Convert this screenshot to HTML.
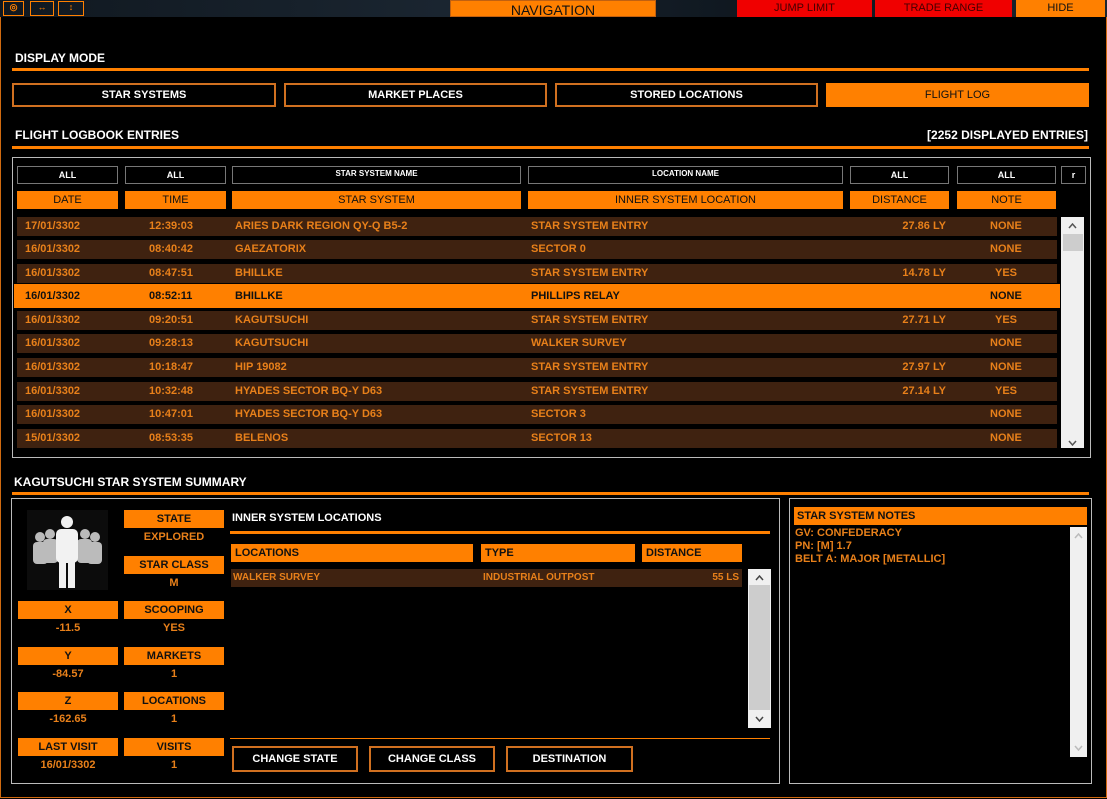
<!DOCTYPE html>
<html><head><meta charset="utf-8">
<style>
*{margin:0;padding:0;box-sizing:border-box}
body{width:1107px;height:799px;background:#000;position:relative;overflow:hidden;font-family:"Liberation Sans",sans-serif;font-weight:bold;font-size:11px;color:#fff}
div{position:absolute}
.o{background:#ff8000;color:#111;text-align:center}
.b{border:2px solid #d07020;color:#fff;text-align:center;background:#000}
.f{border:1px solid #777;color:#fff;text-align:center;font-size:9px}
.r{left:17px;width:1040px;height:19px;background:#3f2210;color:#e8801a;line-height:19px}
.r.s{left:14px;width:1046px;background:#ff8000;color:#111}
.r span{position:absolute}
.t{color:#fff;font-size:12px}
.v{color:#e8801a;text-align:center;width:100px}
.line{background:#ff8000;height:3px}
svg{position:absolute}
</style></head><body>
<div style="left:0;top:0;width:1107px;height:17px;background:linear-gradient(90deg,#101820,#1a2530 40%,#0e161e 70%,#1b2630)"></div>
<div style="left:3px;top:1px;width:21px;height:15px;border:1px solid #ff8000;color:#ff8000;font-size:9px;text-align:center">◎</div>
<div style="left:30px;top:1px;width:24px;height:15px;border:1px solid #ff8000;color:#ff8000;font-size:9px;text-align:center">↔</div>
<div style="left:58px;top:1px;width:26px;height:15px;border:1px solid #ff8000;color:#ff8000;font-size:9px;text-align:center">↕</div>
<div class="o" style="left:450px;top:0;width:206px;height:17px;font-size:14px;font-weight:normal;line-height:18px;border:1px solid #c06010">NAVIGATION</div>
<div style="left:737px;top:0;width:135px;height:17px;background:#f00000;color:#400;text-align:center;line-height:16px;font-weight:normal;font-size:11px">JUMP LIMIT</div>
<div style="left:875px;top:0;width:137px;height:17px;background:#f00000;color:#400;text-align:center;line-height:16px;font-weight:normal;font-size:11px">TRADE RANGE</div>
<div class="o" style="left:1016px;top:0;width:89px;height:17px;line-height:16px;font-weight:normal">HIDE</div>
<div style="left:0;top:17px;width:1107px;height:781px;border:1px solid #d06a10;border-top:none"></div>

<div class="t" style="left:15px;top:51px">DISPLAY MODE</div>
<div class="line" style="left:12px;top:68px;width:1077px"></div>
<div class="b" style="left:12px;top:83px;width:264px;height:24px;line-height:20px">STAR SYSTEMS</div>
<div class="b" style="left:284px;top:83px;width:263px;height:24px;line-height:20px">MARKET PLACES</div>
<div class="b" style="left:555px;top:83px;width:263px;height:24px;line-height:20px">STORED LOCATIONS</div>
<div class="o" style="left:826px;top:83px;width:263px;height:24px;line-height:24px;font-weight:normal">FLIGHT LOG</div>

<div class="t" style="left:15px;top:128px">FLIGHT LOGBOOK ENTRIES</div>
<div class="t" style="left:880px;top:128px;width:208px;text-align:right">[2252 DISPLAYED ENTRIES]</div>
<div class="line" style="left:12px;top:146px;width:1077px"></div>

<div style="left:12px;top:157px;width:1079px;height:301px;border:1px solid #bbb"></div>
<div class="f" style="left:17px;top:166px;width:101px;height:18px;line-height:17px">ALL</div>
<div class="f" style="left:125px;top:166px;width:101px;height:18px;line-height:17px">ALL</div>
<div class="f" style="left:232px;top:166px;width:289px;height:18px;line-height:13px;font-size:8px">STAR SYSTEM NAME</div>
<div class="f" style="left:528px;top:166px;width:315px;height:18px;line-height:13px;font-size:8px">LOCATION NAME</div>
<div class="f" style="left:850px;top:166px;width:99px;height:18px;line-height:17px">ALL</div>
<div class="f" style="left:957px;top:166px;width:99px;height:18px;line-height:17px">ALL</div>
<div class="f" style="left:1061px;top:166px;width:25px;height:18px;line-height:17px">r</div>
<div class="o" style="left:17px;top:191px;width:101px;height:18px;line-height:18px;font-weight:normal">DATE</div>
<div class="o" style="left:125px;top:191px;width:101px;height:18px;line-height:18px;font-weight:normal">TIME</div>
<div class="o" style="left:232px;top:191px;width:289px;height:18px;line-height:18px;font-weight:normal">STAR SYSTEM</div>
<div class="o" style="left:528px;top:191px;width:315px;height:18px;line-height:18px;font-weight:normal">INNER SYSTEM LOCATION</div>
<div class="o" style="left:850px;top:191px;width:99px;height:18px;line-height:18px;font-weight:normal">DISTANCE</div>
<div class="o" style="left:957px;top:191px;width:99px;height:18px;line-height:18px;font-weight:normal">NOTE</div>

<div class="r" style="top:217px"><span style="left:8px">17/01/3302</span><span style="left:132px">12:39:03</span><span style="left:218px">ARIES DARK REGION QY-Q B5-2</span><span style="left:514px">STAR SYSTEM ENTRY</span><span style="right:111px">27.86 LY</span><span style="left:973px">NONE</span></div>
<div class="r" style="top:240px"><span style="left:8px">16/01/3302</span><span style="left:132px">08:40:42</span><span style="left:218px">GAEZATORIX</span><span style="left:514px">SECTOR 0</span><span style="left:973px">NONE</span></div>
<div class="r" style="top:264px"><span style="left:8px">16/01/3302</span><span style="left:132px">08:47:51</span><span style="left:218px">BHILLKE</span><span style="left:514px">STAR SYSTEM ENTRY</span><span style="right:111px">14.78 LY</span><span style="left:978px">YES</span></div>
<div class="r s" style="top:284px;height:24px;line-height:24px"><span style="left:11px">16/01/3302</span><span style="left:135px">08:52:11</span><span style="left:221px">BHILLKE</span><span style="left:517px">PHILLIPS RELAY</span><span style="left:976px">NONE</span></div>
<div class="r" style="top:311px"><span style="left:8px">16/01/3302</span><span style="left:132px">09:20:51</span><span style="left:218px">KAGUTSUCHI</span><span style="left:514px">STAR SYSTEM ENTRY</span><span style="right:111px">27.71 LY</span><span style="left:978px">YES</span></div>
<div class="r" style="top:334px"><span style="left:8px">16/01/3302</span><span style="left:132px">09:28:13</span><span style="left:218px">KAGUTSUCHI</span><span style="left:514px">WALKER SURVEY</span><span style="left:973px">NONE</span></div>
<div class="r" style="top:358px"><span style="left:8px">16/01/3302</span><span style="left:132px">10:18:47</span><span style="left:218px">HIP 19082</span><span style="left:514px">STAR SYSTEM ENTRY</span><span style="right:111px">27.97 LY</span><span style="left:973px">NONE</span></div>
<div class="r" style="top:382px"><span style="left:8px">16/01/3302</span><span style="left:132px">10:32:48</span><span style="left:218px">HYADES SECTOR BQ-Y D63</span><span style="left:514px">STAR SYSTEM ENTRY</span><span style="right:111px">27.14 LY</span><span style="left:978px">YES</span></div>
<div class="r" style="top:405px"><span style="left:8px">16/01/3302</span><span style="left:132px">10:47:01</span><span style="left:218px">HYADES SECTOR BQ-Y D63</span><span style="left:514px">SECTOR 3</span><span style="left:973px">NONE</span></div>
<div class="r" style="top:429px"><span style="left:8px">15/01/3302</span><span style="left:132px">08:53:35</span><span style="left:218px">BELENOS</span><span style="left:514px">SECTOR 13</span><span style="left:973px">NONE</span></div>
<div style="left:1061px;top:217px;width:23px;height:231px;background:#f0f0f0"></div>
<div style="left:1063px;top:234px;width:20px;height:17px;background:#cdcdcd"></div>
<svg style="left:1061px;top:217px" width="23" height="231"><path d="M8 11 L11.5 7 L15 11 M8 224 L11.5 228 L15 224" stroke="#555" stroke-width="1.5" fill="none"/></svg>

<div class="t" style="left:14px;top:475px">KAGUTSUCHI STAR SYSTEM SUMMARY</div>
<div class="line" style="left:12px;top:492px;width:1077px"></div>

<div style="left:11px;top:498px;width:769px;height:286px;border:1px solid #bbb"></div>
<svg style="left:27px;top:510px" width="81" height="80"><rect width="81" height="80" fill="#0c0c0c"/>
<g fill="#bbb"><circle cx="13" cy="27" r="5"/><rect x="6" y="32" width="15" height="22" rx="4"/>
<circle cx="68" cy="27" r="5"/><rect x="60" y="32" width="15" height="22" rx="4"/>
<circle cx="23" cy="24" r="5"/><rect x="16" y="29" width="15" height="24" rx="4"/>
<circle cx="58" cy="24" r="5"/><rect x="50" y="29" width="15" height="24" rx="4"/></g>
<g fill="#f2f2f2"><circle cx="40" cy="12" r="6"/><rect x="29" y="19" width="22" height="34" rx="5"/><rect x="32" y="50" width="7" height="28"/><rect x="41" y="50" width="7" height="28"/></g></svg>
<div class="o" style="left:124px;top:510px;width:100px;height:18px;line-height:18px">STATE</div>
<div class="v" style="left:124px;top:531px">EXPLORED</div>
<div class="o" style="left:124px;top:556px;width:100px;height:18px;line-height:18px">STAR CLASS</div>
<div class="v" style="left:124px;top:577px">M</div>
<div class="o" style="left:18px;top:601px;width:100px;height:18px;line-height:18px">X</div>
<div class="v" style="left:18px;top:622px">-11.5</div>
<div class="o" style="left:124px;top:601px;width:100px;height:18px;line-height:18px">SCOOPING</div>
<div class="v" style="left:124px;top:622px">YES</div>
<div class="o" style="left:18px;top:647px;width:100px;height:18px;line-height:18px">Y</div>
<div class="v" style="left:18px;top:668px">-84.57</div>
<div class="o" style="left:124px;top:647px;width:100px;height:18px;line-height:18px">MARKETS</div>
<div class="v" style="left:124px;top:668px">1</div>
<div class="o" style="left:18px;top:692px;width:100px;height:18px;line-height:18px">Z</div>
<div class="v" style="left:18px;top:713px">-162.65</div>
<div class="o" style="left:124px;top:692px;width:100px;height:18px;line-height:18px">LOCATIONS</div>
<div class="v" style="left:124px;top:713px">1</div>
<div class="o" style="left:18px;top:738px;width:100px;height:18px;line-height:18px">LAST VISIT</div>
<div class="v" style="left:18px;top:759px">16/01/3302</div>
<div class="o" style="left:124px;top:738px;width:100px;height:18px;line-height:18px">VISITS</div>
<div class="v" style="left:124px;top:759px">1</div>

<div style="left:232px;top:512px;color:#fff">INNER SYSTEM LOCATIONS</div>
<div class="line" style="left:230px;top:531px;width:540px"></div>
<div class="o" style="left:231px;top:544px;width:242px;height:18px;line-height:18px;text-align:left;padding-left:4px">LOCATIONS</div>
<div class="o" style="left:481px;top:544px;width:154px;height:18px;line-height:18px;text-align:left;padding-left:4px">TYPE</div>
<div class="o" style="left:642px;top:544px;width:100px;height:18px;line-height:18px;text-align:left;padding-left:4px">DISTANCE</div>
<div style="left:231px;top:569px;width:511px;height:18px;background:#3f2210;color:#e8801a;font-size:10px;line-height:18px"><span style="position:absolute;left:2px">WALKER SURVEY</span><span style="position:absolute;left:252px">INDUSTRIAL OUTPOST</span><span style="position:absolute;right:3px">55 LS</span></div>
<div style="left:748px;top:569px;width:23px;height:159px;background:#f0f0f0"></div>
<div style="left:749px;top:585px;width:21px;height:125px;background:#cdcdcd"></div>
<svg style="left:748px;top:569px" width="23" height="159"><path d="M8 11 L11.5 7 L15 11 M8 148 L11.5 152 L15 148" stroke="#444" stroke-width="1.5" fill="none"/></svg>
<div style="left:230px;top:738px;width:540px;height:1px;background:#ff8000"></div>
<div class="b" style="left:232px;top:746px;width:126px;height:26px;line-height:22px">CHANGE STATE</div>
<div class="b" style="left:369px;top:746px;width:126px;height:26px;line-height:22px">CHANGE CLASS</div>
<div class="b" style="left:506px;top:746px;width:127px;height:26px;line-height:22px">DESTINATION</div>

<div style="left:789px;top:498px;width:303px;height:286px;border:1px solid #bbb"></div>
<div class="o" style="left:794px;top:507px;width:293px;height:18px;line-height:18px;text-align:left;padding-left:3px">STAR SYSTEM NOTES</div>
<div style="left:795px;top:527px;color:#e8801a;line-height:13px">GV: CONFEDERACY<br>PN: [M] 1.7<br>BELT A: MAJOR [METALLIC]</div>
<div style="left:1070px;top:527px;width:17px;height:230px;background:#f0f0f0"></div>
<svg style="left:1070px;top:527px" width="17" height="230"><path d="M5 11 L8.5 7 L12 11 M5 219 L8.5 223 L12 219" stroke="#bbb" stroke-width="1.5" fill="none"/></svg>
</body></html>
